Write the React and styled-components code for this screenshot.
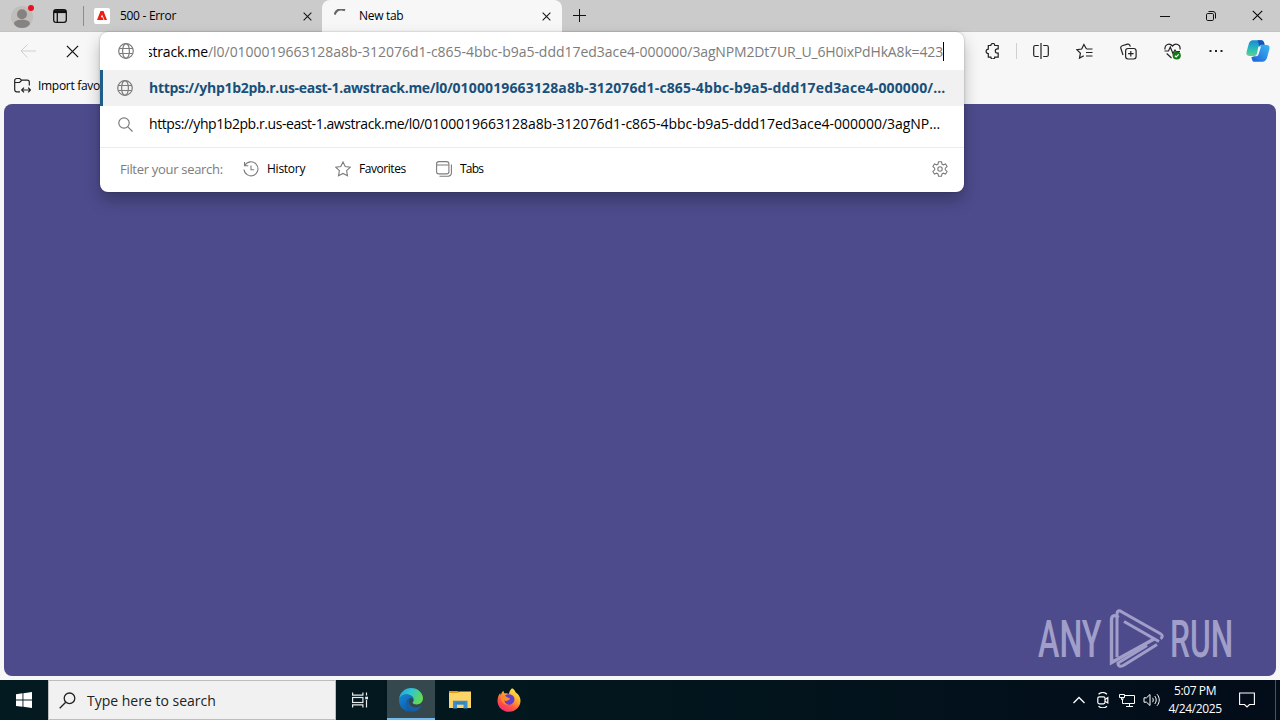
import React from 'react';
import styled, { createGlobalStyle } from 'styled-components';

const URL_HOST = 'https://yhp1b2pb.r.us-east-1.awstrack.me/l0/';
const URL_PATH = '0100019663128a8b-312076d1-c865-4bbc-b9a5-ddd17ed3ace4-000000/';

const GlobeIcon = () => (
  <Icon $size={16} viewBox="0 0 16 16" strokeWidth="1.2">
    <circle cx="8" cy="8" r="7.3" />
    <ellipse cx="8" cy="8" rx="3.4" ry="7.3" />
    <path d="M1.3 5.5h13.4M1.3 10.5h13.4" />
  </Icon>
);

const CloseIcon = ({ size = 9 }) => (
  <Icon $size={size} viewBox="0 0 10 10" strokeWidth={size > 10 ? 0.95 : 1.2}>
    <path d="M.7.7l8.6 8.6M9.3.7L.7 9.3" />
  </Icon>
);

const CopilotIcon = () => (
  <Icon $size={24} viewBox="0 0 24 24">
    <defs>
      <linearGradient id="copA" x1="0" y1="0" x2="0" y2="1">
        <stop offset="0" stopColor="#168bd8" />
        <stop offset=".6" stopColor="#2bbfb4" />
        <stop offset="1" stopColor="#62d08a" />
      </linearGradient>
      <linearGradient id="copB" x1="1" y1="0" x2="0" y2="1">
        <stop offset="0" stopColor="#38b8f2" />
        <stop offset=".5" stopColor="#2f8be6" />
        <stop offset="1" stopColor="#1a5fd6" />
      </linearGradient>
    </defs>
    <path
      d="M7 1.2h8.2c1.6 0 2.4 1 2.8 2.4l.6 2.2h-2.7c-1.5 0-2.4.9-2.9 2.4l-1.8 6c-.6 1.9-1.5 2.7-3.3 2.7H3.3C.7 16.9 0 15 .6 12.7l2.2-8C3.5 2.4 4.8 1.2 7 1.2z"
      fill="url(#copA)"
      stroke="none"
    />
    <path d="M11.5 1.2h3.7c1.6 0 2.4 1 2.8 2.4l.6 2.2h-2.7c-1.2 0-2 .5-2.5 1.5z" fill="#1b51b8" stroke="none" />
    <path
      d="M17 22.8H8.8c-1.6 0-2.4-1-2.8-2.4l-.6-2.2 2.7-1c1.5 0 2.4-.9 2.9-2.4l1.8-6c.6-1.9 1.5-2.7 3.3-2.7h4.6c2.6 0 3.3 1.6 2.7 4.2l-2.2 8c-.7 2.3-2 4.5-4.2 4.5z"
      fill="url(#copB)"
      stroke="none"
    />
    <path d="M12.3 7.8l2.7-.3-2.6 8.3c-.4.9-1.1 1.4-2 1.4H8.3c1.300-.2 2.200-1 2.700-2.500z" fill="#f7f7f7" stroke="none" />
  </Icon>
);

const EdgeIcon = () => (
  <Icon $size={24} viewBox="0 0 24 24">
    <defs>
      <linearGradient id="edgeTop" x1="0" y1="0" x2="1" y2=".4">
        <stop offset="0" stopColor="#1f9fe0" />
        <stop offset=".5" stopColor="#30c5d2" />
        <stop offset="1" stopColor="#62d957" />
      </linearGradient>
      <linearGradient id="edgeLow" x1="0" y1="0" x2=".7" y2="1">
        <stop offset="0" stopColor="#1688d8" />
        <stop offset="1" stopColor="#0c59a4" />
      </linearGradient>
    </defs>
    <path
      d="M.1 11C.7 4.7 5.7 0 12 0c7 0 12 5 12 10.3 0 3.7-2.9 6.2-6.2 6.2-2.9 0-4.3-1-4.3-1.7 0-.5 1.1-1.1 1.1-2.9 0-3-3-5.4-7-5.4C4 6.5 1.3 8.3.1 11z"
      fill="url(#edgeTop)"
      stroke="none"
    />
    <path
      d="M.1 11.2C1.3 8.2 4.3 6.5 7.7 6.5c4 0 7 2.4 7 5.2-.8-1-1.9-1.4-3-1.4-2.5 0-4.3 2.2-4.3 5 0 4 3 7.6 7.3 8.4C7.3 25.5-.8 20 .1 11.2z"
      fill="url(#edgeLow)"
      stroke="none"
    />
    <path
      d="M7.4 15.3c0-2.7 1.7-4.7 3.7-5-.8.9-1.2 2-1.2 3.2 0 3.3 3 5.9 6.7 5.9 1.8 0 3.3-.4 4.7-1.2.6-.3 1 .1.7.6-1.6 2.5-4.3 4.5-7.3 4.9-4.3-.8-7.3-4.4-7.3-8.4z"
      fill="#1660a8"
      stroke="none"
    />
  </Icon>
);

const FirefoxIcon = () => (
  <Icon $size={24} viewBox="0 0 24 24">
    <defs>
      <linearGradient id="fox" x1=".8" y1="0" x2=".2" y2="1">
        <stop offset="0" stopColor="#fff04d" />
        <stop offset=".35" stopColor="#ffb02e" />
        <stop offset=".65" stopColor="#ff5a3c" />
        <stop offset="1" stopColor="#f0247f" />
      </linearGradient>
    </defs>
    <path
      d="M15 .3c2 1 3 2.5 3.6 4 2.3 1.5 4.9 4.6 4.9 8.5 0 6-5 11-11.4 11S.5 19 .5 12.9C.5 9.5 1.7 6.7 3.3 5c0 1 .2 1.8.6 2.3.3-2 1.2-3.5 2.6-4.5 0 1.2.4 2 1.2 2.6 1.5-.2 3-.1 4.3.6C12.2 3.7 13.4 1.8 15 .3z"
      fill="url(#fox)"
      stroke="none"
    />
    <path d="M8 7.5c1.5-1.2 5-1.7 7.2-.2 2.2 1.4 2.8 4 1.8 6.3-1.1 2.5-3.7 3.6-6.2 2.9-2.1-.6-3.3-2.3-3.3-4.2 1.2.7 2.5.8 3.3.2.7-.6 1.9-.8 1.9-1.5C12.7 9.9 9.6 9.9 8 7.5z" fill="#6440c8" stroke="none" />
    <path d="M4 8.5c1.2-1 2.7-1 4-.9.5 1.5 2.4 2.2 4.7 2.6.4.9-1 1.600-2.600 2.400-1 .6-2.200.2-3-.5 0 3 2.200 4.700 4.500 4.500C7 17.800 3.300 14 4 8.500z" fill="#ff8a2b" stroke="none" />
  </Icon>
);

const FolderIcon = () => (
  <Icon $size={22} viewBox="0 0 22 20">
    <path d="M0 1h9l2 2H0z" fill="#e59a17" stroke="none" />
    <path d="M0 3h9l1.5-1.5H22V18H0z" fill="#fcd468" stroke="none" />
    <path d="M4 18.5v-7.7h14.5v7.7h-4v-3.7H8v3.7z" fill="#3d8fcc" stroke="none" />
    <path d="M6.5 13h9.5" stroke="#2f78ad" />
  </Icon>
);

const App = () => {
  return (
    <>
      <GlobalStyle />
      <Desktop>
        <TitleBar>
          <Profile>
            <Icon $size={22} viewBox="0 0 22 22">
              <circle cx="11" cy="11" r="11" fill="#c0bdba" stroke="none" />
              <circle cx="11" cy="8.2" r="5" fill="#858382" stroke="none" />
              <path d="M3 18c0-3 3.5-4.2 8-4.2s8 1.2 8 4.2c-2 3-5 4-8 4s-6-1-8-4z" fill="#858382" stroke="none" />
            </Icon>
            <Dot />
          </Profile>
          <TabActions>
            <Icon $size={14} $color="#111" viewBox="0 0 14 14" strokeWidth="1.3">
              <rect x=".7" y=".7" width="12.6" height="12.6" rx="2.4" />
              <path d="M1 2.6h12" strokeWidth="3" />
              <path d="M4.3 3v10" />
            </Icon>
          </TabActions>
          <Tab>
            <Favicon>
              <Icon $size={10} viewBox="0 0 10 10">
                <path d="M3.5 0h3L10 9H7.5L5 3.5 3.9 6.3h1.7L6.5 9H0z" fill="#ee1d12" stroke="none" />
              </Icon>
            </Favicon>
            <TabTitle>500 - Error</TabTitle>
            <CloseIcon />
          </Tab>
          <Tab $active>
            <Icon $size={15} $color="#666" viewBox="0 0 15 15" strokeWidth="2.2">
              <path d="M.5 5.5C2.500.8 6.500-.6 11 1.200" />
            </Icon>
            <TabTitle>New tab</TabTitle>
            <CloseIcon />
          </Tab>
          <NewTab>
            <Icon $size={14} $color="#111" viewBox="0 0 14 14">
              <path d="M6.5 0v13M0 6.5h13" />
            </Icon>
          </NewTab>
          <WindowControls>
            <Icon $size={10} $color="#111" viewBox="0 0 10 10">
              <path d="M0 5.5h10" />
            </Icon>
            <Icon $size={10} $color="#111" viewBox="0 0 10 10">
              <rect x=".5" y="2.5" width="7" height="7" rx="1.2" />
              <path d="M2.5.5H7A2.5 2.5 0 0 1 9.5 3v4.5" />
            </Icon>
            <CloseIcon size={11} />
          </WindowControls>
        </TitleBar>
        <Toolbar>
          <Nav>
            <Icon $size={16} $color="#cfcfcf" viewBox="0 0 16 16">
              <path d="M16 8H1M7.5 1.5L1 8l6.5 6.5" />
            </Icon>
            <CloseIcon size={13} />
          </Nav>
          <ToolIcons>
            <Icon $size={16} $color="#222" viewBox="0 0 16 16" strokeWidth="1.2">
              <path d="M3.3 2.5h2.5a2 2 0 0 1 4 0h3.4v3.300h-.7a2.200 2.200 0 0 0 0 4.400h.7v3.900H9.800a2 2 0 0 1-4 0H3.300v-3.600a2.200 2.200 0 0 1 0-4.400z" />
            </Icon>
            <Divider />
            <Icon $size={16} $color="#222" viewBox="0 0 16 16" strokeWidth="1.2">
              <path d="M8 0v16M5.8 2.5H2.3A1.6 1.6 0 0 0 .7 4v8a1.6 1.6 0 0 0 1.600 1.500h3.500M10.200 2.500h3.500A1.600 1.600 0 0 1 15.300 4v8a1.600 1.600 0 0 1-1.600 1.500h-3.500" />
            </Icon>
            <Icon $size={17} $color="#222" viewBox="0 0 17 16" strokeWidth="1.2">
              <path d="M10.5 5.5L7.9 1 5.7 5.5.9 6.2l3.5 3.4-.9 5 4.3-2.3M10.5 5.5h6M10 9h6.5M10 12.5h6.5" />
            </Icon>
            <Icon $size={17} $color="#222" viewBox="0 0 17 16" strokeWidth="1.2">
              <rect x="5.6" y="5" width="10.5" height="10.5" rx="2.4" />
              <path d="M10.800 7.500v5.500M8.100 10.200h5.500M3 11.500L.9 5C.5 3.700 1 2.600 2.200 2.200L7.500.7c1.100-.3 2 .2 2.500 1.500l.3 1" />
            </Icon>
            <Icon $size={17} $color="#222" viewBox="0 0 17 17" strokeWidth="1.2">
              <path d="M1 6.500C.2 1.500 5.500-.5 8.500 3 11.500-.5 17 1.500 16 6.500M.5 8h4l1.800-4 2.600 6.500L11 7l1 1.500h4M2.700 10.500L7.500 15" />
              <circle cx="12.7" cy="12.5" r="4.1" fill="#137a13" stroke="none" />
              <path d="M10.900 12.700l1.300 1.200 2.500-2.600" stroke="#fff" />
            </Icon>
            <Icon $size={16} $color="#222" viewBox="0 0 16 16">
              <path d="M1.5 8h2M7 8h2M12.5 8h2" strokeWidth="2" />
            </Icon>
            <CopilotIcon />
          </ToolIcons>
        </Toolbar>
        <FavoritesBar>
          <Icon $size={17} $color="#222" viewBox="0 0 17 16" strokeWidth="1.2">
            <path d="M6 14.300H2.700a2 2 0 0 1-2-2V3a2 2 0 0 1 2-2h3l1.800 1.600h5.800a2 2 0 0 1 2 2V8M.8 5h4.700L7.500 3M8 12.500h8M10 10.200l-2.300 2.300L10 14.800M14.200 10.200l2.200 2.300-2.200 2.300" />
          </Icon>
          Import favorites
        </FavoritesBar>
        <Page>
          <Watermark>
            <MarkWord $width={66} $scale={0.62}>ANY</MarkWord>
            <MarkLogo $size={64} $color="#a19fc9" viewBox="0 0 64 64" strokeWidth="3.4">
              <path d="M17.5 11.5C13 8 10.5 10 10.5 14v42.500l43.500-24" />
              <path d="M16 51V8.500c0-4 2-4.500 5-2.500l38 21.500c3 1.800 3 3.700.5 5.200M23 15.500l35 20M56 38.500L24 58.500c-4.500 3-7 2-7-1.500L46 39.500" strokeWidth="3" />
            </MarkLogo>
            <MarkWord $width={66} $scale={0.61}>RUN</MarkWord>
          </Watermark>
        </Page>
        <Taskbar>
          <StartButton>
            <Icon $size={16} viewBox="0 0 16 16">
              <path d="M0 2.200L6.500 1.300v6.300H0zM7.400 1.200L16 0v7.600H7.400zM0 8.500h6.500v6.300L0 13.900zM7.400 8.500H16V16l-8.600-1.200z" fill="#fff" stroke="none" />
            </Icon>
          </StartButton>
          <SearchBox>
            <Icon $size={17} $color="#222" viewBox="0 0 17 17" strokeWidth="1.3">
              <circle cx="10.5" cy="6.3" r="5.3" />
              <path d="M6.700 10.200L.7 16.200" />
            </Icon>
            Type here to search
          </SearchBox>
          <TaskButton $width={51} $right={3}>
            <Icon $size={16} $color="#e8ecec" viewBox="0 0 16 16" strokeWidth="1.2">
              <path d="M.6.500v2.600h10.300V.500M.6 15.500v-2.600h10.300v2.600M14.500.500v3M14.500 8v7.500" />
              <rect x=".6" y="5.5" width="10.3" height="5" />
              <path d="M13.200 6h2.800" strokeWidth="2.6" />
            </Icon>
          </TaskButton>
          <TaskButton $width={48} $active>
            <EdgeIcon />
          </TaskButton>
          <TaskButton $width={49}>
            <FolderIcon />
          </TaskButton>
          <TaskButton $width={49}>
            <FirefoxIcon />
          </TaskButton>
          <Tray>
            <Icon $size={12} $color="#fff" viewBox="0 0 12 12" strokeWidth="1.3">
              <path d="M.5 9L6 3.500 11.500 9" />
            </Icon>
            <Icon $size={16} $color="#fff" viewBox="0 0 16 16" strokeWidth="1.2">
              <rect x="2.8" y="4.8" width="7.2" height="7" rx="1.5" />
              <path d="M10 7.500l2.800-1.800v5.200L10 9.200M3.500 2.200c2.500-2 6-2 8.500 0M3.500 14.200c2.500 2 6 2 8.500 0" />
            </Icon>
            <Icon $size={16} $color="#fff" viewBox="0 0 16 16">
              <path d="M5.500 3.500h10v8h-10M3.500 7.500v4h2M10.500 11.500v3M7 14.500h7M.5 2.500h5v3h-5zM2.500 5.500v2h1.500v-2" />
            </Icon>
            <Icon $size={18} $color="#fff" viewBox="0 0 18 16">
              <path d="M1 5.800h2.500L7 2.500v11l-3.500-3.300H1zM9.500 5.800c1 1.300 1 3 0 4.400M11.700 4c2 2.400 2 5.600 0 8M14 2.200c3 3.500 3 8 0 11.600" />
            </Icon>
            <Clock>
              <span>5:07 PM</span>
              <span>4/24/2025</span>
            </Clock>
            <Icon $size={16} $color="#fff" viewBox="0 0 16 16" strokeWidth="1.1">
              <path d="M.6 1h14.800v11.500H10.500L8 15l-2.500-2.500H.6z" />
            </Icon>
            <ShowDesktop />
          </Tray>
        </Taskbar>

        <Omnibox>
          <AddressRow>
            <GlobeIcon />
            <Address>
              <UrlPart $dark $spacing={-0.2}>wstrack.me</UrlPart>
              <UrlPart $spacing={-0.03}>/l0/{URL_PATH}</UrlPart>
              <UrlPart $spacing={-0.16}>3agNPM2Dt7UR_U_6H0ixPdHkA8k=423</UrlPart>
            </Address>
          </AddressRow>
          <Suggestion $selected>
            <GlobeIcon />
            <SuggestionText $bold>
              <UrlPart $spacing={-0.3}>{URL_HOST}</UrlPart>
              <UrlPart $spacing={0.14}>{URL_PATH}…</UrlPart>
            </SuggestionText>
          </Suggestion>
          <Suggestion>
            <Icon $size={15} viewBox="0 0 15 15" strokeWidth="1.2">
              <circle cx="6" cy="6" r="5.2" />
              <path d="M9.800 9.800l4.700 4.700" />
            </Icon>
            <SuggestionText>
              <UrlPart $spacing={-0.43}>{URL_HOST}</UrlPart>
              <UrlPart $spacing={-0.03}>{URL_PATH}3agNP…</UrlPart>
            </SuggestionText>
          </Suggestion>
          <Filters>
            <FilterLabel>Filter your search:</FilterLabel>
            <Filter $width={92} $spacing={-0.25}>
              <Icon $size={16} viewBox="0 0 16 16" strokeWidth="1.1">
                <path d="M1.500 1v3.800h3.800M1.800 4.500A7 7 0 1 1 1 8.500M8 4.500v4.200h3.200" />
              </Icon>
              History
            </Filter>
            <Filter $width={101} $spacing={-0.45}>
              <Icon $size={16} viewBox="0 0 16 16" strokeWidth="1.1">
                <path d="M8 .9l2.200 4.600 5.100.7-3.700 3.500.9 5.100L8 12.400l-4.500 2.400.9-5.100L.7 6.200l5.100-.7z" />
              </Icon>
              Favorites
            </Filter>
            <Filter $width={60} $spacing={-0.8}>
              <Icon $size={16} viewBox="0 0 16 16" strokeWidth="1.1">
                <rect x=".6" y=".6" width="12.3" height="12.3" rx="2.2" />
                <path d="M.6 4h12.300M3.500 15.200h8.700a3.200 3.200 0 0 0 3.200-3.200V3.500" />
              </Icon>
              Tabs
            </Filter>
            <Settings>
              <Icon $size={16} viewBox="0 0 16 16" strokeWidth="1.1">
                <circle cx="8" cy="8" r="2.2" />
                <path d="M6.500.8h3l.5 2.300 1.300.7 2.300-.8 1.500 2.600-1.800 1.600v1.600l1.800 1.600-1.500 2.600-2.300-.8-1.300.7-.5 2.300h-3L6 12.900l-1.300-.7-2.300.8L.9 10.400l1.800-1.600V7.200L.9 5.600 2.400 3l2.300.8L6 3.100z" />
              </Icon>
            </Settings>
          </Filters>
        </Omnibox>
      </Desktop>
    </>
  );
};

export default App;

const GlobalStyle = createGlobalStyle`
  * {
    box-sizing: border-box;
  }
  body {
    margin: 0;
    overflow: hidden;
  }
`;

const Desktop = styled.div`
  position: relative;
  width: 1280px;
  height: 720px;
  display: flex;
  flex-direction: column;
  background-color: #f7f7f7;
  color: #000;
  font-family: 'Open Sans', 'Noto Sans', sans-serif;
  font-size: 12px;
  white-space: nowrap;
  overflow: hidden;
`;

const Icon = styled.svg`
  flex: none;
  width: ${({ $size }) => $size}px;
  height: ${({ $size }) => $size}px;
  fill: none;
  stroke: ${({ $color }) => $color || 'currentColor'};
`;

// browser tabs
const TitleBar = styled.div`
  height: 32px;
  display: flex;
  align-items: center;
  background-color: #cbcbcb;
  border-bottom: 1px solid #c3c3c3;
`;

const Profile = styled.div`
  position: relative;
  height: 22px;
  margin: 2px 0 0 11px;
`;

const Dot = styled.span`
  position: absolute;
  top: -1px;
  right: -1px;
  width: 6px;
  height: 6px;
  border-radius: 50%;
  background-color: #e81123;
`;

const TabActions = styled.div`
  width: 51px;
  height: 20px;
  display: flex;
  align-items: center;
  padding-left: 20px;
  border-right: 1px solid #8c8c8c;
`;

const Tab = styled.div`
  width: ${({ $active }) => ($active ? 240 : 238)}px;
  height: 32px;
  display: flex;
  align-items: center;
  padding: 1px ${({ $active }) => ($active ? '11px 0 12px' : '10px 0 10px')};
  color: #1a1a1a;
  border-radius: 8px 8px 0 0;
  background-color: ${({ $active }) => ($active ? '#f7f7f7' : 'transparent')};
`;

const TabTitle = styled.span`
  flex: 1;
  color: #000;
  padding: 0 0 1px 10px;
  letter-spacing: -0.3px;
`;

const Favicon = styled.span`
  width: 16px;
  height: 16px;
  display: flex;
  align-items: center;
  justify-content: center;
  border-radius: 2px;
  background-color: #fff;
`;

const NewTab = styled.div`
  height: 14px;
  margin-left: 11px;
`;

const WindowControls = styled.div`
  display: flex;
  align-items: center;
  gap: 36px;
  margin-left: auto;
  padding-right: 17px;
`;

// address and favorites bars
const Toolbar = styled.div`
  height: 38px;
  display: flex;
  align-items: center;
  justify-content: space-between;
`;

const Nav = styled.div`
  display: flex;
  align-items: center;
  gap: 30px;
  padding-left: 20px;
  color: #111;
`;

const ToolIcons = styled.div`
  display: flex;
  align-items: center;
  gap: 27px;
  padding-right: 10px;
  & > svg:first-child {
    margin-right: -12px;
  }
  & > svg:last-child {
    margin-left: -5px;
  }
`;

const Divider = styled.div`
  width: 1px;
  height: 16px;
  margin-right: -11px;
  background-color: #d0d0d0;
`;

const FavoritesBar = styled.div`
  height: 34px;
  display: flex;
  align-items: center;
  gap: 7px;
  padding: 0 0 3px 14px;
  letter-spacing: -0.3px;
`;

const Page = styled.div`
  height: 572px;
  display: flex;
  align-items: flex-end;
  justify-content: flex-end;
  margin: 0 4px 4px;
  padding: 0 40px 3px 0;
  border-radius: 8px;
  background-color: #4d4b8c;
`;

const Watermark = styled.div`
  display: flex;
  align-items: center;
  color: #a19fc9;
`;

const MarkLogo = styled(Icon)`
  margin: 0 5px 3px -3px;
`;

const MarkWord = styled.div`
  width: ${({ $width }) => $width}px;
  font-family: Roboto, sans-serif;
  font-size: 52px;
  font-weight: 500;
  line-height: 64px;
  transform: scaleX(${({ $scale }) => $scale});
  transform-origin: 0 50%;
`;

// windows taskbar
const Taskbar = styled.div`
  height: 40px;
  display: flex;
  background: linear-gradient(90deg, #031a20, #02151d 55%, #030c19);
`;

const StartButton = styled.div`
  width: 48px;
  display: flex;
  align-items: center;
  justify-content: center;
`;

const SearchBox = styled.div`
  width: 288px;
  display: flex;
  align-items: center;
  gap: 11px;
  padding-left: 10px;
  border: 1px solid #bdbdbd;
  background-color: #f1f1f1;
  color: #222;
  font-size: 14px;
`;

const TaskButton = styled.div`
  width: ${({ $width }) => $width}px;
  display: flex;
  align-items: center;
  justify-content: center;
  padding-right: ${({ $right }) => $right || 0}px;
  background-color: ${({ $active }) => ($active ? '#34484e' : 'transparent')};
  box-shadow: ${({ $active }) => ($active ? 'inset 0 -2px #76b9ed' : 'none')};
`;

const Tray = styled.div`
  display: flex;
  align-items: center;
  gap: 8px;
  margin-left: auto;
  color: #fff;
  & > svg:first-child {
    margin-right: 2px;
  }
`;

const Clock = styled.div`
  width: 54px;
  display: flex;
  flex-direction: column;
  align-items: center;
  margin: 0 9px 0 -1px;
  line-height: 18px;
  letter-spacing: -0.4px;
  padding-bottom: 1px;
`;

const ShowDesktop = styled.div`
  width: 5px;
  height: 40px;
  margin-left: 12px;
  border-left: 1px solid #4a5560;
`;

// address dropdown that lies over the page
const Omnibox = styled.div`
  position: absolute;
  top: 32px;
  left: 100px;
  width: 864px;
  height: 160px;
  border-radius: 8px;
  background-color: #fff;
  color: #7c7c7c;
  box-shadow: 0 0 2px rgba(0, 0, 0, 0.3), 0 8px 16px rgba(0, 0, 0, 0.26);
  overflow: hidden;
`;

const AddressRow = styled.div`
  height: 38px;
  display: flex;
  align-items: center;
  gap: 15px;
  padding-left: 18px;
`;

const Address = styled.div`
  width: 795px;
  display: flex;
  justify-content: flex-end;
  overflow: hidden;
  border-right: 1px solid #000;
  font-size: 14px;
  line-height: 19px;
`;

const UrlPart = styled.span`
  letter-spacing: ${({ $spacing }) => $spacing}px;
  color: ${({ $dark }) => ($dark ? '#000' : 'inherit')};
`;

const Suggestion = styled.div`
  height: 36px;
  display: flex;
  align-items: center;
  gap: 16px;
  padding-left: ${({ $selected }) => ($selected ? 14 : 18)}px;
  border-left: ${({ $selected }) => ($selected ? '3px solid #1d5f8a' : 'none')};
  background-color: ${({ $selected }) => ($selected ? '#f1f1f1' : 'transparent')};
`;

const SuggestionText = styled.span`
  padding-bottom: 1px;
  font-size: 14px;
  font-weight: ${({ $bold }) => ($bold ? 700 : 400)};
  color: ${({ $bold }) => ($bold ? '#18507a' : '#000')};
`;

const Filters = styled.div`
  height: 44px;
  display: flex;
  align-items: center;
  margin-top: 5px;
  padding: 0 16px 2px 20px;
  border-top: 1px solid #ececec;
`;

const FilterLabel = styled.span`
  width: 123px;
  font-size: 13px;
  letter-spacing: -0.3px;
`;

const Filter = styled.div`
  width: ${({ $width }) => $width}px;
  display: flex;
  align-items: center;
  gap: 8px;
  color: #000;
  letter-spacing: ${({ $spacing }) => $spacing}px;
  svg {
    color: #7c7c7c;
  }
`;

const Settings = styled.div`
  height: 16px;
  margin-left: auto;
`;
